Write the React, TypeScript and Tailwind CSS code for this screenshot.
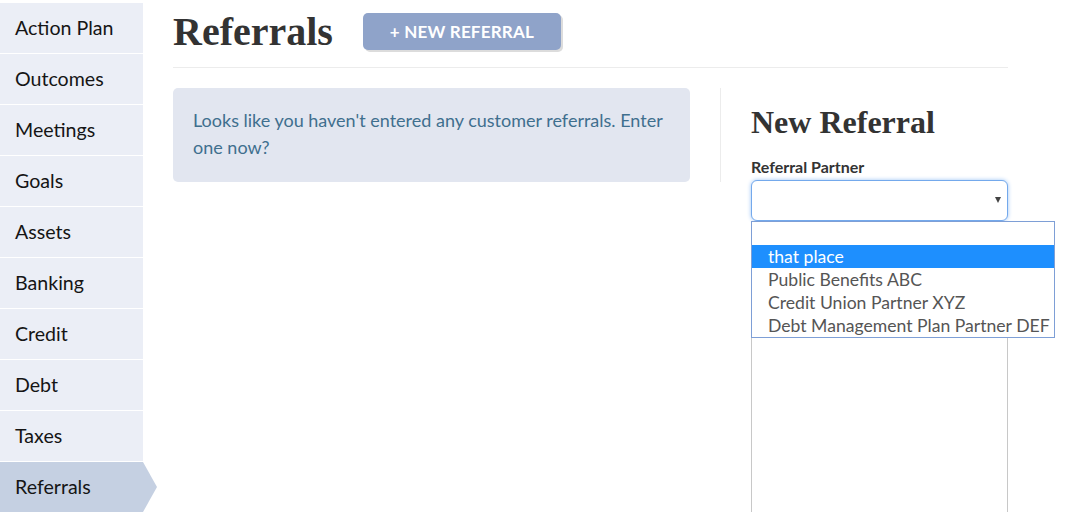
import React from "react";

const items = ["Action Plan", "Outcomes", "Meetings", "Goals", "Assets", "Banking", "Credit", "Debt", "Taxes", "Referrals"];
const options = ["that place", "Public Benefits ABC", "Credit Union Partner XYZ", "Debt Management Plan Partner DEF"];

export default function App() {
  return (
    <div className="w-[1065px] h-[512px] overflow-hidden bg-white flex items-start" style={{ fontFamily: "Lato, 'Noto Sans', sans-serif" }}>
      <nav className="w-[143px] shrink-0 pt-[3px] flex flex-col gap-px">
        {items.map((it) => {
          const active = it === "Referrals";
          return (
            <div
              key={it}
              className={`relative h-[50px] shrink-0 flex items-center pl-[15px] text-[19.6px] text-[#151515] ${active ? "bg-[#c5d0e2]" : "bg-[#ebeef6]"}`}
            >
              {it}
              {active && (
                <span className="absolute left-full top-0 w-0 h-0 border-y-[25px] border-y-transparent border-l-[14px] border-l-[#c5d0e2]" />
              )}
            </div>
          );
        })}
      </nav>
      <main className="flex-1 pl-[30px] pr-[57px]">
        <div className="flex items-center h-[68px] border-b border-[#ececec] pb-[4px]">
          <h1 className="text-[40px] font-bold text-[#333] leading-none" style={{ fontFamily: "'Liberation Serif', serif" }}>Referrals</h1>
          <button className="ml-[30px] w-[198px] h-[37px] rounded-[5px] bg-[#8fa3c9] text-white font-bold text-[17px] shadow-[2px_2px_0_#dcdcdc] tracking-[0.2px]">
            + NEW REFERRAL
          </button>
        </div>
        <div className="flex items-start pt-[20px]">
          <div className="w-[517px] h-[94px] shrink-0 rounded-[5px] bg-[#e2e6f0] px-[20px] pt-[19px] text-[18px] leading-[27px] text-[#3f6f8e]">
            Looks like you haven't entered any customer referrals. Enter one now?
          </div>
          <div className="ml-[30px] w-px h-[94px] shrink-0 bg-[#ececec]" />
          <div className="ml-[30px] flex-1">
            <h2 className="mt-[16px] text-[32px] font-bold text-[#333] leading-[36px]" style={{ fontFamily: "'Liberation Serif', serif" }}>New Referral</h2>
            <label className="block mt-[18px] text-[16px] font-bold text-[#333] leading-[18px]">Referral Partner</label>
            <div className="relative mt-[4px] h-[41px] w-[257px] rounded-[6px] border border-[#74a9ec] shadow-[0_0_4px_#9cc4f5] bg-white">
              <span className="absolute right-[6px] top-[16px] w-0 h-0 border-x-[3px] border-x-transparent border-t-[6px] border-t-[#444]" />
            </div>
            <div className="relative w-[257px] h-[300px] border-x border-[#c8c8c8]">
              <div className="absolute left-[-1px] top-0 w-[304px] border border-[#7e9fd6] bg-white">
                <div className="h-[23px]" />
                {options.map((o, i) => (
                  <div
                    key={o}
                    className={`h-[23px] pl-[16px] text-[17.6px] leading-[23px] whitespace-nowrap ${i === 0 ? "bg-[#1e8ffe] text-white" : "text-[#555]"}`}
                  >
                    {o}
                  </div>
                ))}
              </div>
            </div>
          </div>
        </div>
      </main>
    </div>
  );
}
